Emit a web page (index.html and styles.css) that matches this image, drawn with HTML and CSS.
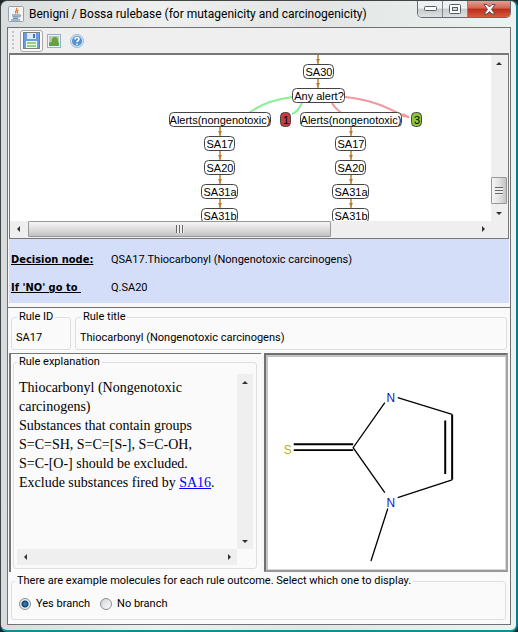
FILE: index.html
```html
<!DOCTYPE html>
<html lang="en">
<head>
<meta charset="utf-8">
<title>Benigni / Bossa rulebase</title>
<link rel="stylesheet" href="styles.css">
</head>
<body>
<div class="window">
  <header class="titlebar">
    <svg class="app-icon" width="16" height="16" viewBox="0 0 16 16" aria-hidden="true">
      <rect x=".5" y=".5" width="15" height="15" rx="1" fill="#f4f4f2" stroke="#8fa3b5"/>
      <path d="M8.500 2c1.500 2-2.500 3-.5 5.500M10.500 4c-1.500 1-1.500 2-.5 3.500" fill="none" stroke="#e07b28" stroke-width="1.300"/>
      <path d="M4 9h7M4.500 10.800h6M5 12.300h5M3 14h9M11 9c2.500-.5 2 2-.5 2.200" fill="none" stroke="#4f7ba6"/>
    </svg>
    <h1 class="title">Benigni / Bossa rulebase (for mutagenicity and carcinogenicity)</h1>
    <div class="caption-buttons">
      <button class="caption" type="button" aria-label="Minimize">
        <svg width="13" height="6" viewBox="0 0 13 6"><rect x=".5" y=".5" width="12" height="4" rx="1" fill="#fff" stroke="#555b66"/></svg>
      </button>
      <button class="caption" type="button" aria-label="Maximize">
        <svg width="12" height="11" viewBox="0 0 12 11"><rect x=".5" y=".5" width="11" height="9" rx="1" fill="#fff" stroke="#555b66"/><rect x="3.500" y="3.500" width="5" height="3" fill="#d5d9dc" stroke="#555b66"/></svg>
      </button>
      <button class="caption close" type="button" aria-label="Close">
        <svg width="13" height="11" viewBox="0 0 13 11"><path d="M1 .5h3l2.500 2.500L9 .5h3L8.500 5.500l3.500 4.500H9L6.500 7.500 4 10H1l3.500-4.500z" fill="#fff" stroke="#5c4a50"/></svg>
      </button>
    </div>
  </header>

  <main class="client">
    <div class="toolbar">
      <span class="grip"></span>
      <button class="tool focused" type="button" aria-label="Save">
        <svg width="17" height="17" viewBox="0 0 17 17"><path d="M1 1h14l1 1v14H1z" fill="#6c9be3"/><path d="M4 1h9v6H4z" fill="#dcebfa"/><path d="M10 2h2v4h-2z" fill="#4774bf"/><path d="M3 9h11v7H3z" fill="#f4faf4"/><path d="M4 11h9M4 14h9" stroke="#8ed480" stroke-width="2"/><rect x=".5" y=".5" width="16" height="16" fill="none" stroke="#000" stroke-dasharray="1 1"/></svg>
      </button>
      <button class="tool" type="button" aria-label="Image">
        <svg width="14" height="14" viewBox="0 0 14 14"><rect x=".5" y=".5" width="13" height="13" fill="#edf3f8" stroke="#8fb1d0"/><path d="M2 2h10v10H2z" fill="#b5cfa8"/><path d="M2 9c2-2 4 0 5-1H5c-1-3 1-5 3-5 3 0 3 3 3 5l1 1v3H2z" fill="#68a040"/></svg>
      </button>
      <button class="tool" type="button" aria-label="Help">
        <svg width="14" height="14" viewBox="0 0 14 14"><circle cx="7" cy="7" r="6.500" fill="#d2e2f2" stroke="#9dbbdb"/><circle cx="7" cy="7" r="5" fill="#5590d0"/><path d="M5 5.500C5 3 9 3 9 5.200 9 6.600 7 6.600 7 8.300M7 9.500v1.500" fill="none" stroke="#fff" stroke-width="1.500"/></svg>
      </button>
    </div>

    <section class="graph" aria-label="Decision tree">
      <div class="canvas">
        <svg width="482" height="166" viewBox="10 55 482 166">
          <defs>
            <g id="link"><path d="M0 0v9" stroke="#c9a26a" stroke-width="2"/><path d="M-2 4h4L0 8z" fill="#b87a30"/></g>
          </defs>
          <g fill="none" stroke="#86f292" stroke-width="2">
            <path d="M292 97C270 100 258 106 249 113"/><path d="M302 103C299 108 298 112 292 114"/>
          </g>
          <g fill="none" stroke="#f3999d" stroke-width="2">
            <path d="M332 103C334 107 337 109 341 113"/><path d="M345 97C375 100 391 110 400 114L409 117"/>
          </g>
          <path d="M410 118l-8-1 2-4z" fill="#f3999d"/>
          <use href="#link" x="318" y="55"/><use href="#link" x="318" y="79"/>
          <use href="#link" x="220" y="127"/><use href="#link" x="220" y="151"/><use href="#link" x="220" y="175"/><use href="#link" x="220" y="199"/>
          <use href="#link" x="351" y="127"/><use href="#link" x="351" y="151"/><use href="#link" x="351" y="175"/><use href="#link" x="351" y="199"/>
          <g class="node-box">
            <rect x="303.500" y="64.500" width="30" height="14" rx="4"/>
            <rect x="292.500" y="88.500" width="52" height="14" rx="4"/>
            <rect x="169.500" y="112.500" width="101" height="14" rx="4"/>
            <rect x="300.500" y="112.500" width="101" height="14" rx="4"/>
            <rect x="204.500" y="136.500" width="30" height="14" rx="4"/>
            <rect x="204.500" y="160.500" width="30" height="14" rx="4"/>
            <rect x="201.500" y="184.500" width="36" height="14" rx="4"/>
            <rect x="201.500" y="208.500" width="36" height="14" rx="4"/>
            <rect x="335.500" y="136.500" width="30" height="14" rx="4"/>
            <rect x="335.500" y="160.500" width="30" height="14" rx="4"/>
            <rect x="332.500" y="184.500" width="36" height="14" rx="4"/>
            <rect x="332.500" y="208.500" width="36" height="14" rx="4"/>
            <rect class="red" x="280.500" y="112.500" width="10" height="14" rx="4"/>
            <rect class="green" x="411.500" y="112.500" width="10" height="14" rx="4"/>
          </g>
          <g class="node-text">
            <text x="319" y="76">SA30</text><text x="319" y="100">Any alert?</text>
            <text x="220" y="124">Alerts(nongenotoxic)</text><text x="286" y="124">1</text>
            <text x="351" y="124">Alerts(nongenotoxic)</text><text x="417" y="124">3</text>
            <text x="220" y="148">SA17</text><text x="220" y="172">SA20</text><text x="220" y="196">SA31a</text><text x="220" y="220">SA31b</text>
            <text x="351" y="148">SA17</text><text x="351" y="172">SA20</text><text x="351" y="196">SA31a</text><text x="351" y="220">SA31b</text>
          </g>
        </svg>
      </div>
      <div class="scroll vertical">
        <button class="arrow up" type="button" aria-label="Scroll up"></button>
        <span class="thumb low"></span>
        <button class="arrow down" type="button" aria-label="Scroll down"></button>
      </div>
      <div class="scroll horizontal">
        <button class="arrow left" type="button" aria-label="Scroll left"></button>
        <span class="thumb wide"></span>
        <button class="arrow right" type="button" aria-label="Scroll right"></button>
      </div>
    </section>

    <dl class="decision">
      <dt>Decision node:</dt><dd>QSA17.Thiocarbonyl (Nongenotoxic carcinogens)</dd>
      <dt>If 'NO' go to&nbsp;</dt><dd>Q.SA20</dd>
    </dl>

    <section class="rule-row">
      <fieldset class="group rule-id"><legend>Rule ID</legend><p>SA17</p></fieldset>
      <fieldset class="group rule-title"><legend>Rule title</legend><p>Thiocarbonyl (Nongenotoxic carcinogens)</p></fieldset>
    </section>

    <section class="split">
      <div class="explanation-pane">
        <fieldset class="group explanation">
          <legend>Rule explanation</legend>
          <div class="scroll-area">
            <p class="prose">Thiocarbonyl (Nongenotoxic carcinogens)<br>Substances that contain groups S=C=SH, S=C=[S-], S=C-OH, <span class="formula">S=C-[O-]</span> should be excluded. Exclude substances fired by <a href="#SA16">SA16</a>.</p>
            <div class="scroll vertical">
              <button class="arrow up" type="button" aria-label="Scroll text up"></button>
              <button class="arrow down" type="button" aria-label="Scroll text down"></button>
            </div>
            <div class="scroll horizontal">
              <button class="arrow left" type="button" aria-label="Scroll text left"></button>
              <button class="arrow right" type="button" aria-label="Scroll text right"></button>
            </div>
          </div>
        </fieldset>
      </div>
      <div class="molecule">
        <svg viewBox="267 357 239 212" role="img" aria-label="Structure diagram">
          <g fill="none" stroke="#000" stroke-width="1.300">
            <path d="M398 397L453 414M385 402L353 447.500 385 493M398 498L453 480M388 509L371 562"/>
            <path d="M453 414v66M446 420v54M293 444h60M293 450h60" stroke-width="2"/>
          </g>
          <g class="atoms"><text class="n" x="391" y="401">N</text><text class="n" x="391" y="507">N</text><text class="s" x="287" y="454">S</text></g>
        </svg>
      </div>
    </section>

    <section class="branches">
      <fieldset class="group branch-group">
        <legend>There are example molecules for each rule outcome. Select which one to display.</legend>
        <div class="choices">
          <label><input type="radio" name="branch" checked>Yes branch</label>
          <label><input type="radio" name="branch">No branch</label>
        </div>
      </fieldset>
    </section>
  </main>
</div>
</body>
</html>
```
FILE: styles.css
```css
* { box-sizing: border-box; }

body {
  margin: 0;
  background: #16282c;
  color: #000;
  font: 11px/14px Roboto, "Noto Sans", sans-serif;
}

p, dl, dd, h1 { margin: 0; }
svg { display: block; }
button { margin: 0; padding: 0; border: 0; background: none; }

.window {
  display: flex;
  flex-direction: column;
  min-height: 100vh;
  padding: 0 5px 5px 6px;
  border: 1px solid #404648;
  border-right: 2px solid #087c92;
  border-bottom: 2px solid #128d97;
  border-radius: 7px;
  background: linear-gradient(90deg, #d8dcdc, #eef0ef 30%, #e2e5e4 60%, #edf2f0);
}

.titlebar {
  display: flex;
  align-items: flex-start;
  height: 26px;
  padding-left: 1px;
}
.app-icon { margin: 5px 5px 0 0; }
.title {
  flex: 1;
  padding-top: 4px;
  font: 12px/18px Roboto, "Noto Sans", sans-serif;
  white-space: nowrap;
}
.caption-buttons {
  display: flex;
  border: 1px solid #666d72;
  border-top: 0;
  border-radius: 0 0 5px 5px;
  overflow: hidden;
}
.caption {
  display: grid;
  place-items: center;
  width: 25px;
  height: 16px;
  border-right: 1px solid #80878c;
  background: linear-gradient(#eef1f1 45%, #c5cacb 50%, #dde1e1);
}
.caption.close {
  width: 42px;
  border: 0;
  background: linear-gradient(#e2a093, #d4644f 45%, #b92d18 50%, #d8593d);
}

.client {
  flex: 1;
  display: flex;
  flex-direction: column;
  border: 1px solid #717171;
  background: #f8f8f8;
}

.toolbar {
  display: flex;
  align-items: center;
  gap: 5px;
  height: 25px;
  padding-left: 4px;
  background: #efefef;
}
.grip {
  width: 2px;
  height: 20px;
  margin-right: 1px;
  background: repeating-linear-gradient(#c0c4c8 0 2px, transparent 2px 4px);
}
.tool { display: grid; place-items: center; width: 18px; height: 22px; }
.tool.focused {
  width: 23px;
  margin-right: -3px;
  border: 1px solid #a9a9a9;
  border-radius: 3px;
  background: #fafafa;
}

.graph {
  display: grid;
  grid-template-columns: 1fr 17px;
  grid-template-rows: 166px 17px;
  margin: 0 1px;
  border: 1px solid #777;
  border-top-width: 2px;
  background: #efefef;
}
.canvas { overflow: hidden; min-width: 0; background: #fff; }
.node-box { fill: #fff; stroke: #444; }
.node-box .red { fill: #cb3a3e; }
.node-box .green { fill: #8cc63f; }
.node-text { font: 11px "Liberation Sans", sans-serif; text-anchor: middle; }

.scroll { display: flex; background: #efefef; }
.vertical { flex-direction: column; justify-content: space-between; width: 16px; }
.horizontal { justify-content: space-between; height: 16px; }
.arrow { display: grid; place-items: center; width: 16px; height: 16px; }
.arrow::before { content: ""; border: 3px solid transparent; }
.up::before { border-top: 0; border-bottom-color: #333; }
.down::before { border-bottom: 0; border-top-color: #333; }
.left::before { border-left: 0; border-right-color: #333; }
.right::before { border-right: 0; border-left-color: #333; }
.thumb { display: grid; place-items: center; border: 1px solid #979797; border-radius: 1px; }
.thumb::before { content: ""; width: 8px; height: 8px; }
.thumb.low {
  height: 27px;
  margin-top: auto;
  margin-bottom: 1px;
  background: linear-gradient(90deg, #f5f5f5, #e2e2e4 50%, #c2c3c6);
}
.thumb.low::before { background: repeating-linear-gradient(#666 0 1px, #eee 1px 3px); }
.thumb.wide {
  width: 63%;
  margin-left: 2px;
  margin-right: auto;
  background: linear-gradient(#f5f5f5, #dededf 50%, #c2c2c2);
}
.thumb.wide::before { background: repeating-linear-gradient(90deg, #666 0 1px, #eee 1px 3px); }

.decision {
  display: grid;
  grid-template-columns: 100px 1fr;
  align-content: start;
  row-gap: 14px;
  height: 64px;
  margin: 0 1px 4px;
  padding: 14px 0 0 2px;
  background: #d5def8;
  white-space: nowrap;
}
.decision dt {
  font-family: "DejaVu Sans Condensed", "Noto Sans", sans-serif;
  font-weight: bold;
  text-decoration: underline;
}

.group {
  min-width: 0;
  margin: 0;
  padding: 0;
  border: 1px solid #dcdfe2;
  border-radius: 3px;
}
.group legend { margin-left: 3px; padding: 0 2px; }
.rule-row legend { margin-left: 5px; }

.rule-row {
  display: flex;
  gap: 4px;
  height: 46px;
  padding: 2px 3px 3px;
  border-top: 1px solid #717171;
  background: #fafafa;
}
.rule-id { width: 60px; }
.rule-title { flex: 1; }
.rule-row p { padding: 7px 4px 0; white-space: nowrap; }

.split {
  flex: 1;
  display: flex;
  gap: 3px;
  padding: 0 2px 0 1px;
}
.explanation-pane {
  display: flex;
  flex: 252;
  min-width: 0;
  padding: 1px 4px 3px 2px;
  border: solid #777;
  border-width: 1px 0 0 2px;
  background: #fafafa;
}
.explanation { flex: 1; display: flex; flex-direction: column; }
.scroll-area {
  flex: 1;
  display: grid;
  grid-template-columns: 1fr 16px;
  grid-template-rows: 1fr 16px;
  margin: 5px 3px 3px;
}
.prose { padding: 4px 8px 0 2px; font: 14px/19px "Liberation Serif", serif; }
.prose a { color: #00f; }
.formula { white-space: nowrap; }

.molecule {
  display: flex;
  flex: 244;
  min-width: 0;
  padding: 2px 1px 1px 2px;
  border: 2px solid;
  border-color: #707070 #a4a4a4 #999 #707070;
  background: #fff;
  box-shadow: inset 2px 2px #c4c4c4, inset -1px -1px #d8d8d8;
}
.molecule svg { width: 100%; }
.atoms { font: 12px "Liberation Sans", sans-serif; text-anchor: middle; }
.atoms .n { fill: #1414c8; }
.atoms .s { fill: #b4b414; }

.branches { padding: 2px 4px 4px 3px; background: #fafafa; }
.branch-group { height: 46px; }
.choices { display: flex; gap: 10px; padding: 9px 7px 0; }
.choices label { display: flex; align-items: center; gap: 5px; }
.choices input {
  appearance: none;
  width: 12px;
  height: 12px;
  margin: 0;
  border: 1px solid #8a8f94;
  border-radius: 50%;
  background: linear-gradient(135deg, #cfd2d4, #fdfdfd);
}
.choices input:checked { background: radial-gradient(circle, #2a7fb8 0 1px, #123f68 3px, #e9edf0 4px); }
```
